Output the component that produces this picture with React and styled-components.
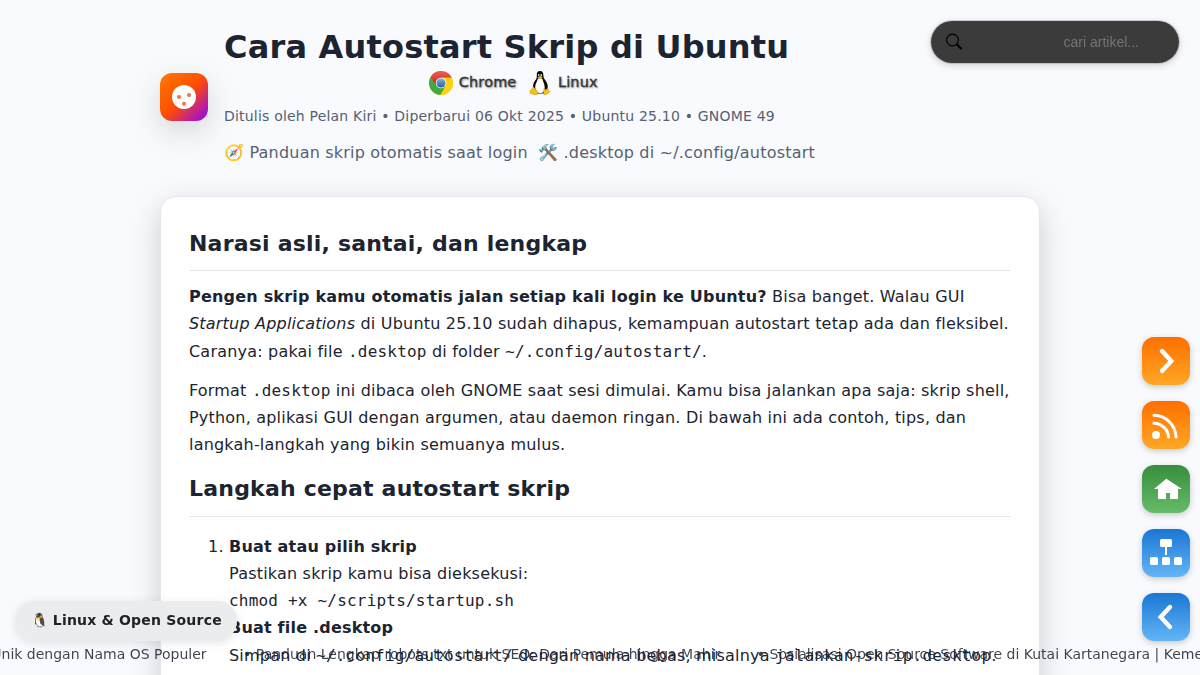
import React from 'react';
import styled, { createGlobalStyle } from 'styled-components';

const sans = '"DejaVu Sans", sans-serif';
const mono = '"DejaVu Sans Mono", monospace';

const GlobalStyle = createGlobalStyle`
  html, body { margin: 0; height: 100%; overflow: hidden; }
  body {
    background: #f8fafe;
    color: #1b2430;
    font: 16px/1.7 ${sans};
    letter-spacing: 0.2px;
  }
  #root { height: 100%; overflow: hidden; }
`;

const Page = styled.div`
  width: 880px;
  margin: 0 auto;
`;

const Header = styled.header`
  display: flex;
  align-items: center;
  gap: 16px;
  height: 148px;
  padding: 23px 0 25px;
`;

const Logo = styled.div`
  flex: none;
  display: grid;
  place-items: center;
  width: 48px;
  height: 48px;
  border-radius: 12px;
  background: linear-gradient(135deg, #ff7a00 0%, #ff4d00 50%, #8f00ff 100%);
  box-shadow: 0 10px 30px rgba(0, 0, 0, 0.15);
`;

const Heading = styled.div`
  display: flex;
  flex-direction: column;
  margin-bottom: 6px;
`;

const Title = styled.h1`
  margin: 0;
  font-size: 32px;
  line-height: 48px;
  white-space: nowrap;
`;

const Platforms = styled.div`
  display: flex;
  justify-content: center;
  align-items: center;
  gap: 12px;
  width: 579px;
  height: 24px;
`;

const Platform = styled.span`
  display: flex;
  align-items: center;
  gap: 5.5px;
  height: 24px;
  color: #333;
  font-size: 14.4px;
  font-weight: 500;
  line-height: 22px;
  -webkit-text-stroke: 0.35px #333;
  text-shadow: 1px 1px 2px rgba(0, 0, 0, 0.5);
  svg { display: block; }
`;

const PlatformName = styled.span`
  height: 24px;
`;

const Meta = styled.div`
  margin-top: 9px;
  color: #566171;
  font-size: 14px;
  line-height: 24px;
`;

const Tagline = styled.div`
  display: flex;
  margin-top: 11px;
  color: #566171;
  line-height: 27px;
  white-space: pre;
`;

const TaglineIcon = styled.span`
  letter-spacing: -0.2px;
`;

const Card = styled.main`
  box-sizing: border-box;
  height: 900px;
  padding: 28px;
  border: 1px solid #e5e7eb;
  border-radius: 16px;
  background: #fff;
  box-shadow: 0 10px 30px rgba(0, 0, 0, 0.18);
`;

const SectionTitle = styled.h2`
  margin: 0 0 12px;
  padding-bottom: 8px;
  border-bottom: 1px solid #e5e7eb;
  font-size: 22px;
  line-height: 37.2px;
`;

const Paragraph = styled.p`
  margin: 0 0 12px;
`;

const Code = styled.code`
  font-family: ${mono};
  font-size: 16px;
`;

const Steps = styled.ol`
  margin: 16px 0;
  padding: 0.4px 0 0 40px;
`;

const Search = styled.form`
  position: fixed;
  top: 20px;
  right: 20px;
  box-sizing: border-box;
  display: flex;
  align-items: center;
  justify-content: space-between;
  width: 250px;
  height: 44px;
  padding: 0 15.5px 0 14px;
  border: 1px solid rgba(0, 0, 0, 0.15);
  border-radius: 22px;
  background: #3b3b3b;
  background-clip: padding-box;
  box-shadow: 0 2px 6px rgba(0, 0, 0, 0.15);
`;

const SearchInput = styled.input`
  width: 100px;
  padding: 0;
  border: 0;
  outline: 0;
  background: transparent;
  color: #fff;
  font: 14px "Liberation Sans", sans-serif;
  &::placeholder { color: #757575; }
`;

const SideNav = styled.nav`
  position: fixed;
  top: 337px;
  right: 10px;
  display: flex;
  flex-direction: column;
  gap: 16px;
`;

const tones = {
  orange: '#ff6f00, #ffa726',
  green: '#388e3c, #66bb6a',
  blue: '#1976d2, #64b5f6',
};

const NavButton = styled.a`
  width: 48px;
  height: 48px;
  border-radius: 12px;
  background: linear-gradient(${(p) => tones[p.$tone]});
  box-shadow: 0 2px 6px rgba(0, 0, 0, 0.2);
  svg { display: block; }
`;

const Badge = styled.div`
  position: fixed;
  left: 15px;
  bottom: 34px;
  box-sizing: border-box;
  display: flex;
  align-items: center;
  height: 40px;
  padding: 0 15.5px;
  border-radius: 20px;
  background: #ebecee;
  color: #222;
  font-size: 14px;
  font-weight: 700;
  white-space: pre;
  box-shadow: 0 2px 10px rgba(0, 0, 0, 0.1);
`;

const Ticker = styled.div`
  position: fixed;
  left: 0;
  right: 0;
  bottom: 9px;
  display: flex;
  justify-content: flex-start;
  overflow: hidden;
  height: 24px;
  color: #1b2430;
  opacity: 0.85;
  font-size: 14px;
  line-height: 24px;
  letter-spacing: 0;
  white-space: nowrap;
`;

const TickerTrack = styled.div`
  flex: none;
  display: flex;
  gap: 36.5px;
  margin-left: -63.4px;
`;

const ChromeIcon = () => (
  <svg width="24" height="24" viewBox="0 0 24 24">
    <defs>
      <linearGradient id="cr" x2="0" y2="1"><stop stopColor="#e8605a" /><stop offset="1" stopColor="#c9201c" /></linearGradient>
      <linearGradient id="cb" x2="0" y2="1"><stop stopColor="#7fb0dc" /><stop offset="1" stopColor="#2561a3" /></linearGradient>
    </defs>
    <circle cx="12" cy="12" r="12" fill="#fbd20c" />
    <path d="M12 12 1.600 6A12 12 0 0 0 11.400 24L17 14.600Z" fill="#43a942" />
    <path d="M1.600 6A12 12 0 0 1 22.700 6.700H12L7.200 14.700Z" fill="url(#cr)" />
    <path d="M12 6.700H22.700A12 12 0 0 1 11.400 24L17 14.800Z" fill="#fbd20c" />
    <circle cx="12" cy="12" r="5.300" fill="#f3f5f6" />
    <circle cx="12" cy="12" r="4.500" fill="url(#cb)" />
  </svg>
);

const TuxIcon = () => (
  <svg width="24" height="24" viewBox="0 0 24 24">
    <path d="M12 0c-2.600 0-3.400 2-3.200 4.400.2 2.300-.3 3.300-1.700 5.200C5.400 12 4.800 14.500 5 17.500L9 22.500h6.500L19.500 18c.8-3.300-.2-6-2-8.600-1.700-2.300-2.100-3.200-2.100-5.200C15.400 1.500 14.300 0 12 0Z" fill="#080808" />
    <path d="M10 7.500c-.5 2.500-2.800 5-2.800 8.500 0 3.600 2 6 5 6 3.200 0 4.600-2.300 4.500-5.600 0-3.500-1.900-6-2.500-8.900Z" fill="#fff" />
    <ellipse cx="10.700" cy="4.100" rx=".8" ry="1" fill="#ddd" />
    <ellipse cx="13.200" cy="4.100" rx=".9" ry="1.100" fill="#ddd" />
    <path d="M9.500 6.200 12 4.900l2.800 1.200-2.500 2.200Z" fill="#f2b90d" />
    <path d="M5.200 15.400 9.800 21c.7 1.500-.2 2.900-2 2.900L2.300 22.600c-.8-.4 0-1.600-.1-3.400.8-1 2-.3 3-3.800Z" fill="#f6c211" stroke="#8b6400" strokeWidth=".3" />
    <path d="m16 17.300 1.400 1.400 2.300-1.500c.8.500.4 2 2.300 3.500-.5 1-2.500 1.300-4 2.900-1.300.7-2.800.2-2.600-1.700Z" fill="#f6c211" stroke="#8b6400" strokeWidth=".3" />
  </svg>
);

const NavIcon = ({ children }) => (
  <svg width="48" height="48" viewBox="0 0 48 48" fill="none" stroke="#fff" strokeWidth="4.400" strokeLinecap="round">
    {children}
  </svg>
);

export default function App() {
  return (
    <>
      <GlobalStyle />
      <Page>
        <Header>
          <Logo>
            <svg width="24" height="24" viewBox="0 0 24 24">
              <circle cx="12" cy="12" r="12" fill="#fff" />
              <g fill="#f0714a">
                <circle cx="7" cy="12" r="2" />
                <circle cx="17" cy="10" r="2" />
                <circle cx="12" cy="18.800" r="2" />
              </g>
            </svg>
          </Logo>
          <Heading>
            <Title>Cara Autostart Skrip di Ubuntu</Title>
            <Platforms>
              <Platform><ChromeIcon /><PlatformName>Chrome</PlatformName></Platform>
              <Platform><TuxIcon /><PlatformName>Linux</PlatformName></Platform>
            </Platforms>
            <Meta>Ditulis oleh Pelan Kiri • Diperbarui 06 Okt 2025 • Ubuntu 25.10 • GNOME 49</Meta>
            <Tagline>
              <span>{'🧭 Panduan skrip otomatis saat login  '}</span>
              <TaglineIcon>🛠️</TaglineIcon>
              <span>{' .desktop di ~/.config/autostart'}</span>
            </Tagline>
          </Heading>
        </Header>
        <Card>
          <SectionTitle>Narasi asli, santai, dan lengkap</SectionTitle>
          <Paragraph>
            <strong>Pengen skrip kamu otomatis jalan setiap kali login ke Ubuntu?</strong> Bisa banget. Walau GUI{' '}
            <em>Startup Applications</em> di Ubuntu 25.10 sudah dihapus, kemampuan autostart tetap ada dan fleksibel.
            Caranya: pakai file <Code>.desktop</Code> di folder <Code>~/.config/autostart/</Code>.
          </Paragraph>
          <Paragraph>
            Format <Code>.desktop</Code> ini dibaca oleh GNOME saat sesi dimulai. Kamu bisa jalankan apa saja: skrip
            shell, Python, aplikasi GUI dengan argumen, atau daemon ringan. Di bawah ini ada contoh, tips, dan
            langkah-langkah yang bikin semuanya mulus.
          </Paragraph>
          <SectionTitle>Langkah cepat autostart skrip</SectionTitle>
          <Steps>
            <li>
              <strong>Buat atau pilih skrip</strong><br />
              Pastikan skrip kamu bisa dieksekusi:<br />
              <Code>chmod +x ~/scripts/startup.sh</Code>
            </li>
            <li>
              <strong>Buat file .desktop</strong><br />
              Simpan di <Code>~/.config/autostart/</Code> dengan nama bebas, misalnya <Code>jalankan-skrip.desktop</Code>.
            </li>
          </Steps>
        </Card>
      </Page>

      <Search>
        <svg width="18" height="18" viewBox="0 0 18 18" fill="none" stroke="#000" strokeLinecap="round">
          <circle cx="7.500" cy="7" r="5.900" strokeWidth="1.200" />
          <path d="m12 11.500 4 4" strokeWidth="2.200" />
        </svg>
        <SearchInput placeholder="cari artikel..." />
      </Search>

      <SideNav>
        <NavButton $tone="orange"><NavIcon><path d="m20 14 9.300 10L20 34" /></NavIcon></NavButton>
        <NavButton $tone="orange">
          <NavIcon>
            <circle cx="14" cy="34" r="4" fill="#fff" stroke="none" />
            <path d="M12 22.200A15 14.500 0 0 1 26.500 36M12 14.200A22.500 22.500 0 0 1 34 36" strokeWidth="3" />
          </NavIcon>
        </NavButton>
        <NavButton $tone="green">
          <NavIcon><path d="M24.300 13.800 12 24h4V34h8v-6h4v6h8V24h4Z" fill="#fff" stroke="none" /></NavIcon>
        </NavButton>
        <NavButton $tone="blue">
          <NavIcon>
            <g fill="#fff" stroke="none">
              <rect x="18" y="10" width="12" height="8" rx="1.500" />
              <rect x="23" y="17" width="2" height="9" />
              <rect x="8" y="28" width="8" height="8" rx="1.500" />
              <rect x="20" y="28" width="8" height="8" rx="1.500" />
              <rect x="32" y="28" width="8" height="8" rx="1.500" />
            </g>
          </NavIcon>
        </NavButton>
        <NavButton $tone="blue"><NavIcon><path d="M28 14 18.700 24 28 34" /></NavIcon></NavButton>
      </SideNav>

      <Ticker>
        <TickerTrack>
          <span>• Fakta Unik dengan Nama OS Populer</span>
          <span>• Panduan Lengkap robots.txt untuk SEO: Dari Pemula hingga Mahir</span>
          <span>• Sosialisasi Open Source Software di Kutai Kartanegara | Kementerian Kominfo</span>
        </TickerTrack>
      </Ticker>
      <Badge>🐧 Linux &amp; Open Source</Badge>
    </>
  );
}
